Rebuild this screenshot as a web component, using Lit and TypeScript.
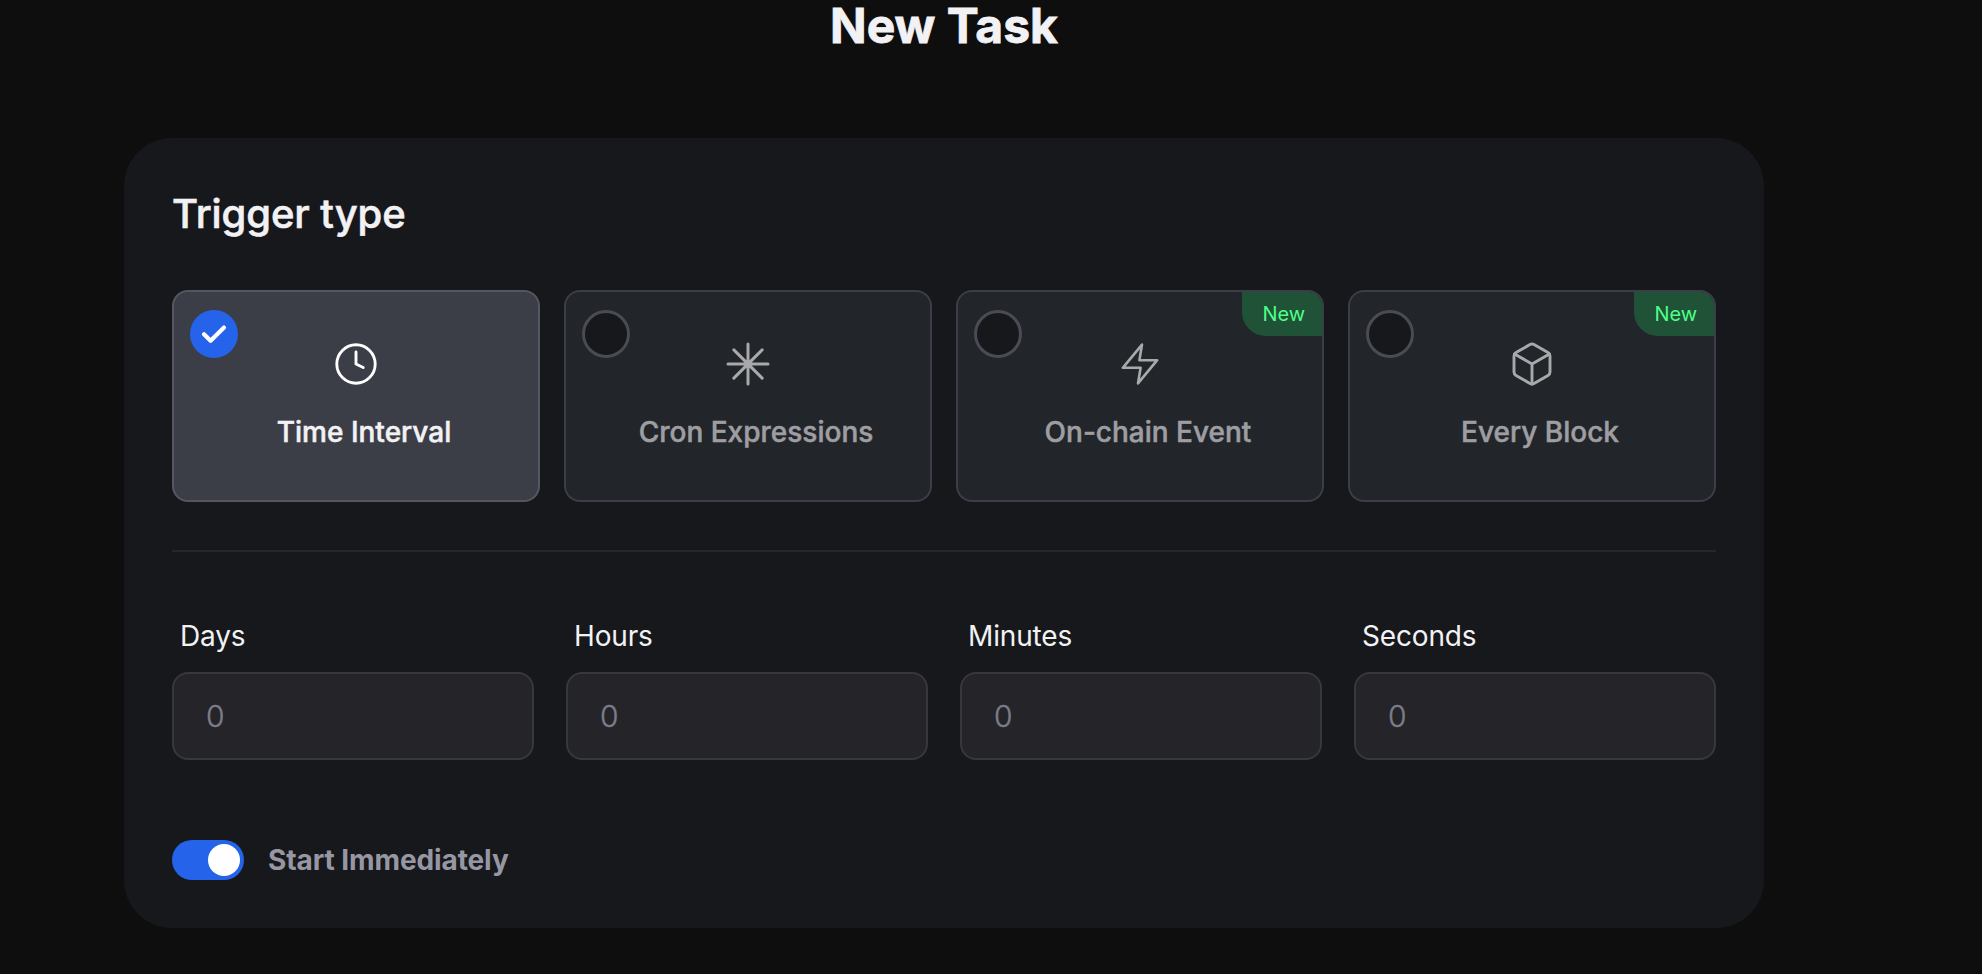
import { LitElement, html, css, svg, nothing } from "lit";
import { customElement, property, state } from "lit/decorators.js";
import { classMap } from "lit/directives/class-map.js";

const icons = {
  clock: svg`<circle cx="24" cy="24" r="19.2"/><path d="M24 12v12l7.2 3.5"/>`,
  asterisk: svg`<path stroke-width="3" d="M24 4v40M4 24h40M9.86 9.86l28.28 28.28M38.14 9.86L9.86 38.14"/>`,
  bolt: svg`<path stroke-width="2.6" d="M26 4.6L6.8 27.8H24.6L22 43.4L41.2 20.2H23.4Z"/>`,
  box: svg`<path d="M42 32V16a4 4 0 0 0-2-3.46l-14-8a4 4 0 0 0-4 0l-14 8A4 4 0 0 0 6 16v16a4 4 0 0 0 2 3.46l14 8a4 4 0 0 0 4 0l14-8A4 4 0 0 0 42 32z"/><path d="M6.54 13.92L24 24.02l17.46-10.1M24 44.16V24"/>`,
};
type IconName = keyof typeof icons;

@customElement("trigger-card")
class TriggerCard extends LitElement {
  @property() label = "";
  @property() icon: IconName = "clock";
  @property({ type: Boolean }) selected = false;
  @property({ type: Boolean }) fresh = false;

  static styles = css`
    :host { display: block; }
    .card {
      position: relative; box-sizing: border-box; height: 212px;
      display: flex; flex-direction: column; align-items: center;
      padding-top: 48px; border: 2px solid #3d3d47; border-radius: 16px;
      background: #222529; color: #9e9ea2; cursor: pointer; overflow: hidden;
    }
    .card.selected { background: #3c3e47; border-color: #565662; color: #f2f2f4; }
    .icon {
      width: 48px; height: 48px; fill: none; stroke: #a8a9ab;
      stroke-width: 2.9; stroke-linecap: round; stroke-linejoin: round;
    }
    .selected .icon { stroke: #fff; }
    .label {
      margin-top: 24px; padding-left: 16px;
      font-size: 28px; line-height: 40px; font-weight: 500; white-space: nowrap;
      -webkit-text-stroke: 0.5px currentColor;
    }
    .radio {
      position: absolute; left: 16px; top: 18px; box-sizing: border-box;
      width: 48px; height: 48px; border-radius: 50%;
      border: 3px solid #4a4b55; background: #17181c;
    }
    .selected .radio { border: 0; background: #2563eb; }
    .tick {
      display: block; width: 48px; height: 48px; fill: none; stroke: #fff;
      stroke-width: 4.2; stroke-linecap: round; stroke-linejoin: round;
    }
    .badge {
      position: absolute; right: 0; top: 0; box-sizing: border-box;
      width: 80px; height: 44px; padding-left: 20.5px;
      border-bottom-left-radius: 24px; background: #205237; color: #4dff88;
      font-size: 20px; line-height: 44px;
    }
  `;

  render() {
    return html`<div class=${classMap({ card: true, selected: this.selected })}>
      <div class="radio">
        ${this.selected
          ? html`<svg class="tick" viewBox="0 0 48 48"><path d="M14 24.2L20.6 30.8L34 17.6"/></svg>`
          : nothing}
      </div>
      ${this.fresh ? html`<div class="badge">New</div>` : nothing}
      <svg class="icon" viewBox="0 0 48 48">${icons[this.icon]}</svg>
      <div class="label">${this.label}</div>
    </div>`;
  }
}

@customElement("number-field")
class NumberField extends LitElement {
  @property() label = "";

  static styles = css`
    :host { display: block; }
    .label {
      display: block; padding-left: 8px; font-size: 28px; line-height: 40px;
      letter-spacing: -0.15px; color: #f2f2f4;
    }
    .input {
      display: block; box-sizing: border-box; width: 100%; height: 88px;
      margin: 16px 0 0; padding: 0 32px; border: 2px solid #37373f; border-radius: 16px;
      background: #242429; color: #f2f2f4; font: 300 30px Inter, sans-serif; outline: none;
    }
    .input::placeholder { color: #7b7d8a; opacity: 1; -webkit-text-stroke: 0.4px #7b7d8a; }
  `;

  render() {
    return html`<label class="label" for="field">${this.label}</label>
      <input class="input" id="field" placeholder="0" inputmode="numeric" />`;
  }
}

@customElement("app-root")
class AppRoot extends LitElement {
  @state() selected = 0;
  @state() immediate = true;

  private triggers: { label: string; icon: IconName; fresh: boolean }[] = [
    { label: "Time Interval", icon: "clock", fresh: false },
    { label: "Cron Expressions", icon: "asterisk", fresh: false },
    { label: "On-chain Event", icon: "bolt", fresh: true },
    { label: "Every Block", icon: "box", fresh: true },
  ];

  static styles = css`
    :host {
      display: block; box-sizing: border-box; height: 974px; overflow: hidden;
      padding-left: 124px; background: #0e0e0e; color: #f2f2f4;
      font-family: Inter, sans-serif;
    }
    .page { width: 1640px; }
    .title {
      margin: 0 0 86px; height: 52px; font-size: 48px; line-height: 52px;
      font-weight: 700; text-align: center; -webkit-text-stroke: 0.8px currentColor;
    }
    .panel {
      box-sizing: border-box; height: 790px; padding: 48px;
      border-radius: 48px; background: #17181c;
    }
    .heading {
      margin: 0; font-size: 40px; line-height: 56px; font-weight: 500;
      letter-spacing: -0.1px; -webkit-text-stroke: 0.6px currentColor;
    }
    .cards { display: grid; grid-template-columns: repeat(4, 1fr); gap: 24px; margin-top: 48px; }
    .divider { height: 2px; margin-top: 48px; background: #26272b; }
    .fields { display: grid; grid-template-columns: repeat(4, 1fr); gap: 32px; margin-top: 64px; }
    .start { display: flex; align-items: center; gap: 24px; margin-top: 80px; }
    .toggle {
      display: flex; justify-content: flex-start; box-sizing: border-box;
      width: 72px; height: 40px; padding: 4px; border: 0; border-radius: 20px;
      background: #3d3d47; cursor: pointer;
    }
    .toggle.on { justify-content: flex-end; background: #2563eb; }
    .knob { width: 32px; height: 32px; border-radius: 50%; background: #fff; }
    .caption {
      font-size: 28px; line-height: 40px; font-weight: 700;
      letter-spacing: -0.1px; color: #9797a3;
    }
  `;

  render() {
    return html`<main class="page">
      <h1 class="title">New Task</h1>
      <section class="panel">
        <h2 class="heading">Trigger type</h2>
        <div class="cards">
          ${this.triggers.map(
            (t, i) => html`<trigger-card
              .label=${t.label} .icon=${t.icon} .fresh=${t.fresh}
              .selected=${i === this.selected}
              @click=${() => (this.selected = i)}
            ></trigger-card>`
          )}
        </div>
        <div class="divider"></div>
        <div class="fields">
          ${["Days", "Hours", "Minutes", "Seconds"].map(
            (l) => html`<number-field .label=${l}></number-field>`
          )}
        </div>
        <div class="start">
          <button
            class=${classMap({ toggle: true, on: this.immediate })}
            role="switch" aria-checked=${this.immediate} aria-label="Start Immediately"
            @click=${() => (this.immediate = !this.immediate)}
          ><span class="knob"></span></button>
          <span class="caption">Start Immediately</span>
        </div>
      </section>
    </main>`;
  }
}
